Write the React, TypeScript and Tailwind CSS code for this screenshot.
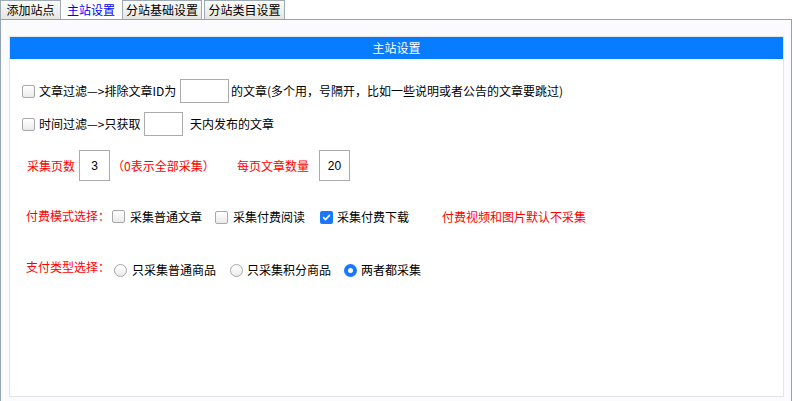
import React from 'react';

const font = { fontFamily: '"Noto Sans CJK SC", "Noto Sans", sans-serif' };

const Check = ({ checked = false }: { checked?: boolean }) =>
  checked ? (
    <span className="inline-flex w-[13px] h-[13px] shrink-0 items-center justify-center rounded-[2px] bg-[#1977fd]">
      <svg width="9" height="9" viewBox="0 0 10 10" fill="none">
        <path d="M1.8 5.2 L4 7.3 L8.3 2.6" stroke="#fff" strokeWidth="1.8" strokeLinecap="round" strokeLinejoin="round" />
      </svg>
    </span>
  ) : (
    <span className="inline-block w-[13px] h-[13px] shrink-0 rounded-[2px] border border-[#a8a8a8] bg-linear-to-b from-white to-[#ebebeb]" />
  );

const Radio = ({ checked = false }: { checked?: boolean }) =>
  checked ? (
    <span className="inline-block w-[13px] h-[13px] shrink-0 rounded-full border-[4px] border-[#1977fd] bg-white" />
  ) : (
    <span className="inline-block w-[13px] h-[13px] shrink-0 rounded-full border border-[#a8a8a8] bg-linear-to-b from-white to-[#ebebeb]" />
  );

const Box = ({ w, h, value }: { w: string; h: string; value?: string }) => (
  <input
    readOnly
    value={value ?? ''}
    className={`${w} ${h} shrink-0 border border-[#ababab] bg-white text-center text-[12px] text-black outline-none`}
    style={{ fontFamily: '"Liberation Sans", Arial, sans-serif' }}
  />
);

const tabs = [
  { label: '添加站点', cls: 'w-[61px]', active: false },
  { label: '主站设置', cls: 'w-[60px]', active: true },
  { label: '分站基础设置', cls: 'w-[80px] ml-[1px]', active: false },
  { label: '分站类目设置', cls: 'w-[81px] ml-[2px]', active: false },
];

export default function App() {
  return (
    <div className="w-[792px] h-[401px] flex flex-col bg-white text-[12px] leading-none text-black overflow-hidden" style={font}>
      {/* tab strip */}
      <div className="flex h-[19px] shrink-0">
        {tabs.map((t) =>
          t.active ? (
            <div key={t.label} className={`${t.cls} flex items-center justify-center text-[#0000ff]`}>
              {t.label}
            </div>
          ) : (
            <div
              key={t.label}
              className={`${t.cls} flex items-center justify-center border-t border-l border-r border-[#9eaab5] bg-linear-to-b from-[#fafaf7] to-[#e6e6e1]`}
            >
              {t.label}
            </div>
          )
        )}
      </div>

      {/* frame */}
      <div className="flex-1 border-t border-l border-r border-[#93a3b1] bg-[#fbfbfe] pt-[16px]">
        <div className="ml-[8px] w-[775px] h-[361px] border border-[#e4e4e8] bg-white">
          <div className="h-[22px] bg-[#077cfe] text-white flex items-center justify-center">主站设置</div>

          <div className="pl-[12px]">
            {/* row 1 */}
            <div className="mt-[20px] h-[24px] flex items-center whitespace-nowrap">
              <Check />
              <span className="ml-[4px] w-[138px]">文章过滤—&gt;排除文章ID为</span>
              <span className="ml-[3px]"><Box w="w-[49px]" h="h-[24px]" /></span>
              <span className="ml-[2px]">的文章(多个用，号隔开，比如一些说明或者公告的文章要跳过)</span>
            </div>

            {/* row 2 */}
            <div className="mt-[9px] h-[24px] flex items-center whitespace-nowrap">
              <Check />
              <span className="ml-[4px] w-[102px]">时间过滤—&gt;只获取</span>
              <span className="ml-[3px]"><Box w="w-[39px]" h="h-[24px]" /></span>
              <span className="ml-[7px]">天内发布的文章</span>
            </div>

            {/* row 3 */}
            <div className="mt-[14px] h-[31px] flex items-center whitespace-nowrap">
              <span className="ml-[5px] w-[48px] text-[#ff0000]">采集页数</span>
              <span className="ml-[4px]"><Box w="w-[31px]" h="h-[31px]" value="3" /></span>
              <span className="ml-[2px] w-[125px] text-[#ff0000]">（0表示全部采集）</span>
              <span className="w-[72px] text-[#ff0000]">每页文章数量</span>
              <span className="ml-[10px]"><Box w="w-[31px]" h="h-[31px]" value="20" /></span>
            </div>

            {/* row 4 */}
            <div className="mt-[24px] h-[24px] flex items-center whitespace-nowrap">
              <span className="ml-[4px] w-[84px] mb-[3px] text-[#ff0000]">付费模式选择：</span>
              <span className="ml-[2px]"><Check /></span>
              <span className="ml-[5px] w-[72px]">采集普通文章</span>
              <span className="ml-[13px] flex"><Check /></span>
              <span className="ml-[5px] w-[72px]">采集付费阅读</span>
              <span className="ml-[15px] flex"><Check checked /></span>
              <span className="ml-[4px] w-[72px]">采集付费下载</span>
              <span className="ml-[33px] text-[#ff0000]">付费视频和图片默认不采集</span>
            </div>

            {/* row 5 */}
            <div className="mt-[29px] h-[24px] flex items-center whitespace-nowrap">
              <span className="ml-[4px] w-[84px] mb-[6px] text-[#ff0000]">支付类型选择：</span>
              <span className="ml-[4px] flex"><Radio /></span>
              <span className="ml-[5px] w-[84px]">只采集普通商品</span>
              <span className="ml-[14px] flex"><Radio /></span>
              <span className="ml-[4px] w-[84px]">只采集积分商品</span>
              <span className="ml-[13px] flex"><Radio checked /></span>
              <span className="ml-[4px]">两者都采集</span>
            </div>
          </div>
        </div>
      </div>
    </div>
  );
}
